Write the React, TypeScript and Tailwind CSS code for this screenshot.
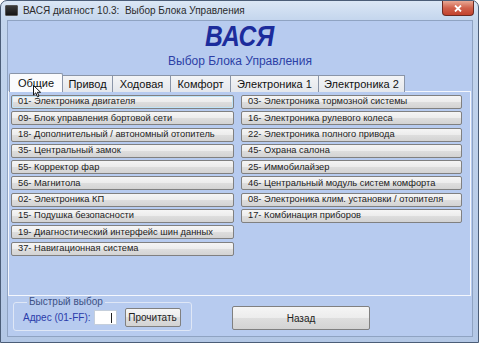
import React from 'react';

const leftItems = [
  '01- Электроника двигателя',
  '09- Блок управления бортовой сети',
  '18- Дополнительный / автономный отопитель',
  '35- Центральный замок',
  '55- Корректор фар',
  '56- Магнитола',
  '02- Электроника КП',
  '15- Подушка безопасности',
  '19- Диагностический интерфейс шин данных',
  '37- Навигационная система',
];

const rightItems = [
  '03- Электроника тормозной системы',
  '16- Электроника рулевого колеса',
  '22- Электроника полного привода',
  '45- Охрана салона',
  '25- Иммобилайзер',
  '46- Центральный модуль систем комфорта',
  '08- Электроника клим. установки / отопителя',
  '17- Комбинация приборов',
];

const tabs = [
  { label: 'Привод', w: 'w-[51px]' },
  { label: 'Ходовая', w: 'w-[59px]' },
  { label: 'Комфорт', w: 'w-[61px]' },
  { label: 'Электроника 1', w: 'w-[89px]' },
  { label: 'Электроника 2', w: 'w-[87px]' },
];

const btn =
  'rounded-[2px] border border-[#808080] bg-[linear-gradient(#f5f5f5,#ececec_50%,#dedede_50%,#d3d3d3)] text-[#222]';

const ItemButton: React.FC<{ label: string; focused?: boolean }> = ({ label, focused }) => (
  <button
    type="button"
    className={`flex h-[14px] items-center pl-[6px] text-left text-[9.3px] leading-none ${btn} ${
      focused ? 'border-[#3d86c2] shadow-[inset_0_0_0_1px_#bfe4f8]' : ''
    }`}
  >
    {label}
  </button>
);

const App: React.FC = () => {
  return (
    <div className="h-[345px] w-[480px] bg-white font-['Liberation_Sans',Arial,sans-serif]">
      <div className="relative flex h-[343px] w-[479px] flex-col rounded-t-[7px] border border-[#4b5d77] bg-[linear-gradient(180deg,#dbe7f5,#c3d5ed_20px,#b3c7e5)]">
        {/* title bar */}
        <div className="flex h-[19px] items-start justify-between">
          <div className="flex items-center gap-[5px] pl-[4px] pt-[4px]">
            <div className="h-[11px] w-[13px] rounded-[1px] border border-[#555] bg-[linear-gradient(#3a3a3a,#161616)]" />
            <span className="whitespace-pre text-[10px] leading-[11px] text-[#2a2a2a]">
              ВАСЯ диагност 10.3:  Выбор Блока Управления
            </span>
          </div>
          <div className="mr-[4px] flex h-[15px] w-[32px] items-center justify-center rounded-b-[4px] border border-t-0 border-[#6b2a22] bg-[linear-gradient(#e9a894,#d0614c_50%,#c2422e)]">
            <svg width="8" height="7" viewBox="0 0 8 7">
              <path d="M1 0.5 L7 6.5 M7 0.5 L1 6.5" stroke="#fff" strokeWidth="1.8" />
            </svg>
          </div>
        </div>

        {/* client area */}
        <div className="ml-[6px] flex h-[317px] w-[466px] flex-col border border-[#8fa3c2] bg-[#b7cbef]">
          <div className="flex h-[52px] flex-col items-center">
            <div className="scale-x-85 text-[29px] font-bold italic leading-[30px] text-[#1c2c9c]">ВАСЯ</div>
            <div className="mt-[3px] text-[12px] leading-[14px] text-[#2c3fa6]">Выбор Блока Управления</div>
          </div>

          {/* tabs */}
          <div className="relative z-10 -mb-px flex h-[19px] items-end pl-[1px]">
            <div className="relative z-10 flex h-[19px] w-[54px] items-center justify-center rounded-t-[2px] border border-b-0 border-[#8a95a8] bg-[#fafbfd] text-[11px] text-[#111]">
              Общие
            </div>
            {tabs.map((t) => (
              <div
                key={t.label}
                className={`-ml-px flex h-[17px] items-center justify-center border border-b-0 border-[#8a95a8] bg-[linear-gradient(#f3f4f6,#e4e7ec)] text-[11px] text-[#111] ${t.w}`}
              >
                {t.label}
              </div>
            ))}
          </div>

          {/* tab panel */}
          <div className="flex h-[205px] w-[463px] border border-[#f4f7fd] pl-[2px] pr-[7px] pt-[3px]">
            <div className="grid grid-cols-[223px_221px] gap-x-[7px]">
              <div className="flex flex-col gap-[2.3px]">
                {leftItems.map((l, i) => (
                  <ItemButton key={l} label={l} focused={i === 0} />
                ))}
              </div>
              <div className="flex flex-col gap-[2.3px]">
                {rightItems.map((l) => (
                  <ItemButton key={l} label={l} />
                ))}
              </div>
            </div>
          </div>

          {/* bottom */}
          <div className="flex items-start pl-[5px]">
            <fieldset className="h-[35px] w-[179px] rounded-[3px] border border-[#dfe7f6] pl-[9px]">
              <legend className="ml-[4px] px-[2px] text-[10px] leading-[12px] text-[#3c5184]">Быстрый выбор</legend>
              <div className="flex items-center">
                <span className="text-[10px] text-[#2a3caa]">Адрес (01-FF):</span>
                <div className="ml-[3px] flex h-[15px] w-[23px] items-center justify-end border border-[#c5cfdc] bg-white pr-[4px]">
                  <div className="h-[10px] w-px bg-[#222]" />
                </div>
                <button type="button" className={`ml-[8px] h-[19px] w-[56px] text-[10px] ${btn}`}>
                  Прочитать
                </button>
              </div>
            </fieldset>
            <button type="button" className={`ml-[40px] mt-[10px] h-[24px] w-[138px] text-[10px] ${btn}`}>
              Назад
            </button>
          </div>
        </div>

        {/* mouse cursor */}
        <svg className="absolute left-[32px] top-[84px] z-20" width="9" height="13" viewBox="0 0 9 13">
          <path d="M0.5 0.5 L0.5 10 L2.8 7.8 L4.5 11.8 L6 11.1 L4.4 7.3 L7.6 7.3 Z" fill="#fff" stroke="#000" strokeWidth="0.9" />
        </svg>
      </div>
    </div>
  );
};

export default App;
